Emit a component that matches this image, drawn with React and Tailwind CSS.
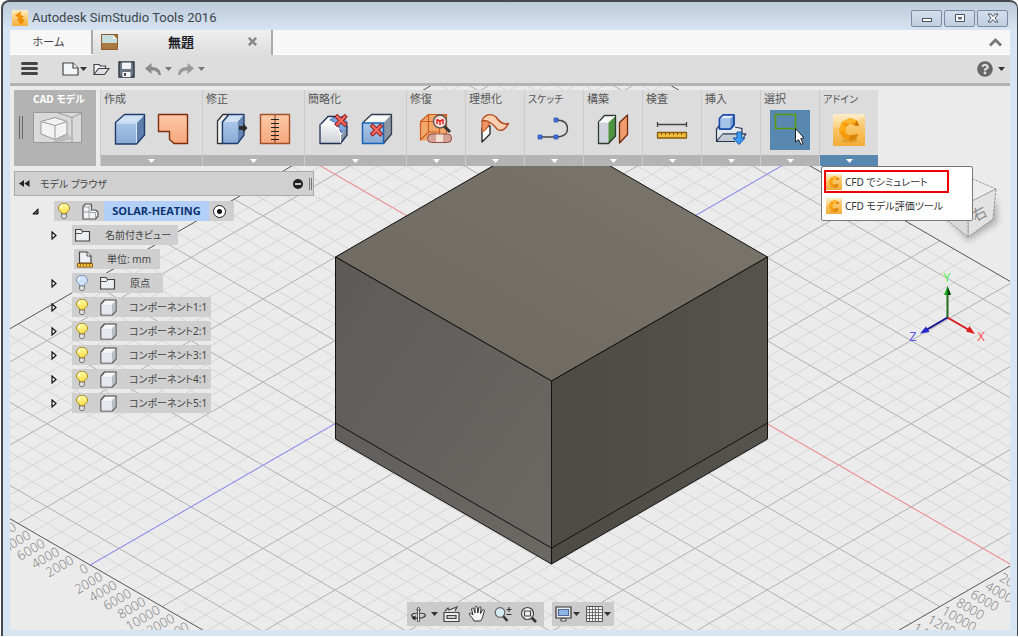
import React, { useState } from 'react';
import { FaQuestionCircle } from 'react-icons/fa';

const JP = "font-['Noto_Sans','Noto_Sans_CJK_JP',sans-serif]";

const Caret = ({ className = 'text-[#333]' }) => (
  <svg viewBox="0 0 7 4" className={`w-[7px] h-1 shrink-0 ${className}`} fill="currentColor">
    <path d="M0 0h7L3.5 4z" />
  </svg>
);

/* ---------- Ribbon icons ---------- */

const Icon = ({ children }) => (
  <svg viewBox="0 0 36 36" className="w-9 h-9 shrink-0" strokeLinejoin="round">
    {children}
  </svg>
);

const Gradients = () => (
  <svg className="absolute w-0 h-0" aria-hidden="true">
    <defs>
      <linearGradient id="blueFront" x1="0" y1="0" x2="0" y2="1">
        <stop offset="0" stopColor="#a9c6e8" />
        <stop offset="1" stopColor="#8aaad4" />
      </linearGradient>
      <linearGradient id="peach" x1="0" y1="0" x2="0" y2="1">
        <stop offset="0" stopColor="#fbc9a6" />
        <stop offset="1" stopColor="#f7a87e" />
      </linearGradient>
      <linearGradient id="whiteFace" x1="0" y1="0" x2="0" y2="1">
        <stop offset="0" stopColor="#f4f4f6" />
        <stop offset="1" stopColor="#cdd0d6" />
      </linearGradient>
      <linearGradient id="cfdBack" x1="0" y1="0" x2="0" y2="1">
        <stop offset="0" stopColor="#fdeecb" />
        <stop offset="0.45" stopColor="#fbd07a" />
        <stop offset="1" stopColor="#f3ae3c" />
      </linearGradient>
      <linearGradient id="bulb" x1="0" y1="0" x2="0" y2="1">
        <stop offset="0" stopColor="#fffbb0" />
        <stop offset="1" stopColor="#f8dc3c" />
      </linearGradient>
    </defs>
  </svg>
);

const BoxIcon = () => (
  <Icon>
    <path d="M3.5 10.5L12.5 2.5H32.5L24.5 10.5z" fill="#cfe1f3" />
    <path d="M24.5 10.5L32.5 2.5V23L24.5 32z" fill="#5e7eac" />
    <path d="M3.5 10.5H24.5V32H3.5z" fill="url(#blueFront)" />
    <path d="M4 11H24.5L32 3M24.5 11V31" fill="none" stroke="#d7e8f8" />
    <path d="M3.5 10.5L12.5 2.5H32.5V23L24.5 32H3.5z" fill="none" stroke="#1e3c6e" strokeWidth="1.4" />
  </Icon>
);

const PatchIcon = () => (
  <Icon>
    <path
      d="M3.5 2.5H32.5V31.5H19L14.5 27.5V19.5H3.5z"
      fill="url(#peach)" stroke="#7e2c0c" strokeWidth="1.4"
    />
  </Icon>
);

const PushIcon = () => (
  <Icon>
    <path d="M3.5 31.5V9L9 2.5H15L8.5 10V31.5z" fill="#eef0f2" stroke="#333" strokeWidth="1.3" />
    <path d="M8.5 10L15 2.5H30L23.5 10z" fill="#cfe1f3" />
    <path d="M23.5 10L30 2.5V23L23.5 31.5z" fill="#6687b4" />
    <path d="M8.5 10H23.5V31.5H8.5z" fill="url(#blueFront)" />
    <path d="M8.5 10L15 2.5H30V23L23.5 31.5H8.5z" fill="none" stroke="#1e3c6e" strokeWidth="1.3" />
    <path d="M25 14h4V11L33.5 16l-4.5 5V18H25z" fill="#2c2c2c" />
  </Icon>
);

const StitchIcon = () => (
  <Icon>
    <path d="M3.5 2.5H32.5V31.5H3.5z" fill="url(#peach)" stroke="#a0502a" strokeWidth="1.4" />
    <path d="M18 3V31" stroke="#8a3a18" />
    <path d="M14 7.5h8M14 11.5h8M14 15.5h8M14 19.5h8M14 23.5h8M14 27.5h8" stroke="#222" />
  </Icon>
);

const Cross = ({ x, y }) => (
  <g transform={`translate(${x} ${y})`} strokeLinecap="square">
    <path d="M-3.8 -3.8L3.8 3.8M3.8 -3.8L-3.8 3.8" stroke="#8e1616" strokeWidth="4.2" />
    <path d="M-3.8 -3.8L3.8 3.8M3.8 -3.8L-3.8 3.8" stroke="#f4695c" strokeWidth="2.4" />
  </g>
);

const FilletIcon = () => (
  <Icon>
    <path d="M4 13L12 4.5H24L31 13V23L24.5 31.5H4z" fill="#fafafa" />
    <path d="M14 8L19 4.500H27L31 10V17L25 21Q23 11 14 8z" fill="#7fa6da" stroke="#2850a0" strokeWidth="1" strokeDasharray="3 1" />
    <path d="M4 13H11Q24 14 24.5 25V31.5H4z" fill="url(#whiteFace)" />
    <path d="M24.5 24L31 16V23L24.5 31.5z" fill="#8794a8" />
    <path d="M19 4.5H12L4 13V31.5H24.5L31 23V14" fill="none" stroke="#1e2f58" strokeWidth="1.3" />
    <path d="M24.5 31V24Q23 13 11 13H4.500" fill="none" stroke="#fff" />
    <Cross x="25" y="8.5" />
  </Icon>
);

const RemoveFaceIcon = () => (
  <Icon>
    <path d="M3.5 11L12.5 2.5H32.5L24.5 11z" fill="#fafafa" />
    <path d="M24.5 11L32.5 2.5V22L24.5 31.5z" fill="#8c95a4" />
    <path d="M3.5 11L12.5 2.5H32.5V22L24.5 31.5" fill="none" stroke="#333c50" strokeWidth="1.3" />
    <path d="M3.5 11H24.5V31.5H3.5z" fill="url(#blueFront)" stroke="#1a62b4" strokeWidth="1.5" />
    <Cross x="17.5" y="18" />
  </Icon>
);

const RepairIcon = () => (
  <Icon>
    <path d="M2.5 9.5L10.5 2.5H28.5V22L22 28.5H2.5z" fill="#f2a86c" />
    <path d="M2.5 28.5V9.5H21.5V28.5M2.5 9.5L10.5 2.5H28.5V22M21.5 9.5L28.5 2.5M10.5 3V20M2.5 28L10.5 20H20" fill="none" stroke="#cc5a1c" strokeWidth="1.2" />
    <path d="M26 14L32 20" stroke="#333" strokeWidth="3" />
    <circle cx="22" cy="9.5" r="6.5" fill="#fce0d8" stroke="#555" strokeWidth="1.4" />
    <path d="M18.500 7.500L22 9L25.500 7.500M22 9V13M19 8V12M25 8V12" fill="none" stroke="#e02020" strokeWidth="1.5" />
    <rect x="9.5" y="22" width="24" height="8.5" rx="4" fill="#d6a298" stroke="#8c4a42" />
    <path d="M18 22.5h7v7.5h-7z" fill="#f0e0d4" />
  </Icon>
);

const RibbonSurfaceIcon = () => (
  <Icon>
    <path d="M5 16V30L13 22V14z" fill="#fff" stroke="#222" strokeWidth="1.3" />
    <path d="M5 9V20Q10 19 13 12L12 5z" fill="#ee9464" />
    <path d="M5 9C7 2 15 1 19 5C23 11 27 13 31.500 11.500C28 18 24 20 20 17C16 12 11 7 5 9z" fill="#fbcfb2" stroke="#b4491e" strokeWidth="1.4" />
    <path d="M5 9V20Q10 18 12.500 11" fill="none" stroke="#b4491e" />
  </Icon>
);

const SketchIcon = () => (
  <Icon>
    <path d="M4 25H20Q31.5 25 31.5 16.5Q31.5 8 20 8" fill="none" stroke="#444" strokeWidth="1.3" />
    <path d="M2 23h4v4h-4zM18 23h4v4h-4zM18 6h4v4h-4z" fill="#3f6fd8" stroke="#2650b0" strokeWidth="0.7" />
  </Icon>
);

const PlaneIcon = () => (
  <Icon>
    <path d="M3.5 10L9.5 3.5H20.5L13.5 10z" fill="#fafafa" />
    <path d="M3.5 10H13.5V31.5H3.5z" fill="#cfd2da" />
    <path d="M13.5 10L20.5 3.5V24L13.5 31.5z" fill="#4d9340" />
    <path d="M3.5 10L9.5 3.5H20.5V24L13.5 31.5H3.5z" fill="none" stroke="#2e3a34" strokeWidth="1.3" />
    <path d="M4 10H13.5L20 4" fill="none" stroke="#fff" />
    <path d="M24.5 10.5L32.5 3V22.5L24.5 31z" fill="#f09c6c" stroke="#6e2c10" strokeWidth="1.3" />
  </Icon>
);

const MeasureIcon = () => (
  <Icon>
    <path d="M3.5 12.5H32.5M3.5 10V15M32.5 10V15" stroke="#444" strokeWidth="1.3" />
    <rect x="3.5" y="20.5" width="29" height="5.5" fill="#f2bd3c" stroke="#8a5a0c" strokeWidth="1.3" />
    <path d="M7.5 21v2M11.5 21v2M15.5 21v2M19.5 21v2M23.5 21v2M27.5 21v2" stroke="#8a5a0c" />
  </Icon>
);

const InsertIcon = () => (
  <Icon>
    <path d="M3.5 17L9 12H25V17H31V21L25 29H3.5z" fill="#e4e7ec" />
    <path d="M3.5 17L7 13M3.5 17V29.500H20M3.500 29.500L10 22H33L30 26M22 15L29 16.500V22" fill="none" stroke="#24344e" strokeWidth="1.2" />
    <path d="M10 22H32L27 29H4.500z" fill="#c4cad4" />
    <path d="M10 22H33M3.500 29.500H22" stroke="#24344e" />
    <path d="M6.5 6.5L10 3H21V13L17.5 17H6.5z" fill="#6f98d0" stroke="#1546a6" strokeWidth="1.4" />
    <path d="M6.5 6.5L10 3H21L17.500 6.500z" fill="#e2edf9" />
    <path d="M6.500 6.500H17.5V17H6.500z" fill="#a5c4ea" />
    <path d="M6.500 6.500L10 3H21V13L17.5 17H6.500z" fill="none" stroke="#1546a6" strokeWidth="1.4" />
    <path d="M24 20h4.5v6H32l-6 6.5-6-6.5h4z" fill="#3c9cf4" stroke="#1558a8" />
  </Icon>
);

const SelectIcon = () => (
  <svg viewBox="0 0 40 40" className="w-10 h-10">
    <path d="M5.5 4.5H25.5V18.5H5.5z" fill="none" stroke="#5a9a10" strokeWidth="1.6" />
    <path d="M25.5 18.5V32L28.5 29.5L31 34.5L33 33.5L30.8 28.5L34 28z" fill="#fff" stroke="#222" />
  </svg>
);

const CfdIcon = ({ className }) => (
  <svg viewBox="0 0 32 32" className={className}>
    <rect width="32" height="32" fill="url(#cfdBack)" />
    <path d="M0 14Q18 14 32 2V32H0z" fill="#f2a72a" opacity="0.25" />
    <ellipse cx="17" cy="26.5" rx="8" ry="2" fill="#d08a20" opacity="0.5" />
    <path d="M17 4L24 6.5L26 12L21.5 11.5L17 10L13 13L12.5 19L17 21.5L25 20L23 25L16 27L9 23L6 16L9 8z" fill="#f39a0c" />
    <path d="M17 4L24 6.5L17 10L9 8z" fill="#ffb62c" />
    <path d="M9 8L13 13L12.5 19L6 16z" fill="#ffac18" />
    <path d="M24 6.5L26 12L21.5 11.5z" fill="#c87204" />
    <path d="M17 21.5L25 20L23 25L16 27z" fill="#d98208" />
  </svg>
);

/* ---------- Tree icons ---------- */

const BulbIcon = ({ off }) => (
  <svg viewBox="0 0 12 16" className="w-3 h-4 shrink-0">
    <path d="M3.5 9.5C1 8 .5 6.5 .5 5A5.5 4.8 0 0 1 11.5 5C11.5 6.5 11 8 8.5 9.5V11H3.5z" fill={off ? '#cfe0fa' : 'url(#bulb)'} stroke={off ? '#7c92b8' : '#a88a20'} />
    <path d="M4 2.5Q2.5 3.5 3 5.5" fill="none" stroke="#fff" strokeWidth="1.2" />
    <path d="M3.5 11h5v3l-1 1.500h-3l-1-1.500z" fill="#ddd" stroke="#666" strokeWidth="0.8" />
  </svg>
);

const FolderIcon = () => (
  <svg viewBox="0 0 16 14" className="w-4 h-[14px] shrink-0">
    <path d="M.5 13V1.5H6L7.5 3.5H14.5V13z" fill="#eceef2" stroke="#444" strokeWidth="1.2" />
    <path d="M1 5.5H6.5L8 4" fill="none" stroke="#555" />
  </svg>
);

const BodyIcon = () => (
  <svg viewBox="0 0 17 17" className="w-[17px] h-[17px] shrink-0">
    <path d="M1 5L4.5 1H16V12L12 16H1z" fill="#f7f7f9" stroke="#444" strokeWidth="1.2" strokeLinejoin="round" />
    <path d="M12 5.5L15.5 1.5V12L12 15.5z" fill="#b8bcc6" />
    <path d="M1.6 5.5H12V15.4H1.6z" fill="#e6e7ee" />
  </svg>
);

const AssemblyIcon = () => (
  <svg viewBox="0 0 17 17" className="w-[17px] h-[17px] shrink-0" strokeLinejoin="round">
    <path d="M1 3.5L3.5 1H9.5V7H13.5L16 9V13L13.5 16H1z" fill="#f2f3f6" stroke="#555" strokeWidth="1.2" />
    <path d="M1 4H7L9.5 1.5M7 4V9H1M7 9L9.5 7M7 9V16M8 9.5H13.5L16 7.5M13.5 9.5V15.5" fill="none" stroke="#8a8e98" strokeWidth="0.8" />
  </svg>
);

const UnitIcon = () => (
  <svg viewBox="0 0 16 17" className="w-4 h-[17px] shrink-0">
    <path d="M2.5 12V1H10L14 5V12z" fill="#eef0f4" stroke="#444" strokeWidth="1.2" />
    <path d="M10 1V5H14" fill="#fff" stroke="#444" />
    <path d="M.5 12.5H15.5V16H.5z" fill="#f6c63c" stroke="#8a5a0c" />
    <path d="M3.5 13v1.5M6.5 13v1.5M9.5 13v1.5M12.5 13v1.5" stroke="#8a5a0c" />
  </svg>
);

/* ---------- 3D scene ---------- */

const CX = 551;
const CY = 299;
const DX = 14.4;
const DY = 8.314;
const MIN = -17;
const MAX = 32;

// Grid coordinates (a along the right axis, b along the left one) to screen space
const project = (a, b) => [CX + DX * (b - a), CY + DY * (a + b)];

const gridLines = [];
for (let k = MIN; k <= MAX; k++) {
  const edge = k === MIN || k === MAX;
  const stroke = edge ? '#555555' : k % 5 === 0 ? '#b0b0b0' : '#d6d6d6';
  const order = edge ? 2 : k % 5 === 0 ? 1 : 0;
  gridLines.push({ id: `a${k}`, from: project(k, MIN), to: project(k, MAX), stroke, order });
  gridLines.push({ id: `b${k}`, from: project(MIN, k), to: project(MAX, k), stroke, order });
}
gridLines.sort((p, q) => p.order - q.order);

const leftTicks = [-5, -4, -3, -2, -1, 0, 1, 2, 3, 4, 5, 6, 7];
const rightTicks = [1, 2, 3, 4, 5, 6, 7];

const Scene = () => {
  const [bx1, by1] = project(MAX, 0);
  const [bx2, by2] = project(MIN, 0);
  const [rx1, ry1] = project(0, MIN);
  const [rx2, ry2] = project(0, MAX);
  return (
    <svg
      viewBox="10 86 1000 544"
      preserveAspectRatio="xMidYMid slice"
      className="absolute inset-0 w-full h-full"
    >
      <defs>
        <linearGradient id="topFace" x1="0" y1="1" x2="1" y2="0">
          <stop offset="0" stopColor="#6c685f" />
          <stop offset="1" stopColor="#7b776d" />
        </linearGradient>
        <linearGradient id="leftFace" x1="0" y1="0" x2="1" y2="1">
          <stop offset="0" stopColor="#5c5b57" />
          <stop offset="1" stopColor="#6a6964" />
        </linearGradient>
        <linearGradient id="rightFace" x1="0" y1="0" x2="1" y2="0">
          <stop offset="0" stopColor="#4e4a44" />
          <stop offset="1" stopColor="#54534c" />
        </linearGradient>
        <filter id="soft" x="-50%" y="-50%" width="200%" height="200%">
          <feGaussianBlur stdDeviation="3" />
        </filter>
      </defs>

      {gridLines.map((l) => (
        <line key={l.id} x1={l.from[0]} y1={l.from[1]} x2={l.to[0]} y2={l.to[1]} stroke={l.stroke} />
      ))}
      <line x1={bx1} y1={by1} x2={bx2} y2={by2} stroke="#8a8aff" />
      <line x1={rx1} y1={ry1} x2={rx2} y2={ry2} stroke="#ff8a8a" />

      {/* Ruler labels */}
      <g fill="#777" fontSize="13" fontFamily="'Open Sans', sans-serif" fontWeight="300">
        {leftTicks.map((k) => {
          const [x, y] = project(MAX, k);
          return (
            <text key={k} transform={`translate(${x - 1} ${y + 6}) rotate(-30)`} textAnchor="end">
              {Math.abs(k) * 2000}
            </text>
          );
        })}
        {rightTicks.map((k) => {
          const [x, y] = project(k, MAX);
          return (
            <text key={k} transform={`translate(${x + 1} ${y + 7}) rotate(30)`}>
              {k * 2000}
            </text>
          );
        })}
      </g>

      {/* Solid body */}
      <g stroke="#111" strokeWidth="1" strokeLinejoin="round">
        <path d="M335.5 257L551.5 132L767.5 257L551.5 381z" fill="url(#topFace)" />
        <path d="M335.5 257L551.5 381V564L335.5 439z" fill="url(#leftFace)" />
        <path d="M767.5 257L551.5 381V564L767.5 439z" fill="url(#rightFace)" />
        <path d="M335.5 423L551.5 548L767.5 423" fill="none" />
      </g>

      {/* View cube */}
      <path d="M944 214L968 241L998 222L996 200z" fill="#888" opacity="0.6" filter="url(#soft)" />
      <g stroke="#888" strokeWidth="0.8" strokeDasharray="3 1">
        <path d="M968 177L996 189L968 203L940 190z" fill="#ededed" />
        <path d="M996 189L993 219L968 237V203z" fill="#e2e2e2" />
        <path d="M940 190L943 217L968 237V203z" fill="#dadada" />
      </g>
      <text
        transform="translate(975 222) rotate(-28)"
        fontSize="15" fill="#8a8a8a" fontFamily="'Noto Sans CJK JP', sans-serif"
      >
        右
      </text>

      {/* Axis triad */}
      <g strokeWidth="2">
        <path d="M947.5 317.5V292" stroke="#1e6a1e" />
        <path d="M944 295L947.5 286L951 295z" fill="#18b018" />
        <path d="M947.5 286L951 295H947.5z" fill="#0a3c0a" />
        <path d="M947.5 317.5L969 330" stroke="#d81818" />
        <path d="M966 331.5L975 334L969.5 326z" fill="#e02020" />
        <path d="M947.5 317.5L927 329.5" stroke="#101090" />
        <path d="M920 333.5L926 326.5L929.5 332z" fill="#2828c8" />
      </g>
      <g fontSize="12" fontFamily="'Liberation Sans', sans-serif" textAnchor="middle">
        <text x="947" y="282" fill="#4cf04c">Y</text>
        <text x="981" y="341" fill="#ff5050">X</text>
        <text x="913" y="341" fill="#5858e8">Z</text>
      </g>
    </svg>
  );
};

/* ---------- Chrome ---------- */

const WindowButton = ({ label, children }) => (
  <button
    aria-label={label}
    className="w-[31px] h-[17px] flex items-center justify-center rounded-[2px] border border-[#7d8aa6] bg-gradient-to-b from-[#d3deea] to-[#c0cfdf]"
  >
    <svg viewBox="0 0 12 10" className="w-3 h-[10px]" fill="#fff" stroke="#4a5068">
      {children}
    </svg>
  </button>
);

const TitleBar = () => (
  <header className="h-7 shrink-0 flex items-center justify-between px-[2px]">
    <div className="flex items-center gap-1 pt-1">
      <svg viewBox="0 0 16 16" className="w-4 h-4">
        <rect width="16" height="16" fill="url(#cfdBack)" />
        <path d="M9 1L3 5.5L7 8L5 9.5L9 15L13 10L9.5 8.5L12 6.5L8.5 5z" fill="#f08c00" />
      </svg>
      <h1 className="font-['Roboto',sans-serif] text-[13px] leading-4 text-[#3c444c]">
        Autodesk SimStudio Tools 2016
      </h1>
    </div>
    <div className="flex gap-[2px] pt-1">
      <WindowButton label="最小化"><rect x="1.5" y="5.5" width="9" height="3" /></WindowButton>
      <WindowButton label="最大化">
        <path d="M1.5 1.5h9v7h-9zM4.5 4.5h3v1.500h-3z" fillRule="evenodd" />
      </WindowButton>
      <WindowButton label="閉じる">
        <path d="M1 1h3l2 2.500L8 1h3L8 5l3 4H8L6 6.500 4 9H1l3-4z" />
      </WindowButton>
    </div>
  </header>
);

const TabBar = () => (
  <nav className="h-[25px] shrink-0 flex bg-[#f7f7f7] border-b border-white text-[#444]">
    <button className="w-[83px] pr-1 text-[11px] leading-4 border-r-2 border-[#aaa]">ホーム</button>
    <div className="w-[180px] h-[25px] flex items-center justify-between pl-2 pr-[10px] pb-[2px] bg-gradient-to-b from-[#f0f0f0] to-[#dddddd] border-r-2 border-[#aaa]">
      <svg viewBox="0 0 17 16" className="w-[17px] h-4">
        <rect x=".5" y=".5" width="16" height="15" fill="#a87840" stroke="#8a5e30" />
        <path d="M1 1h11l4 4v4H1z" fill="#c4dcdc" />
        <path d="M12 1v4h4z" fill="#f4f4e0" />
      </svg>
      <span className="text-[13px] leading-4 font-bold text-[#1c1c28]">無題</span>
      <button aria-label="タブを閉じる" className="p-1">
        <svg viewBox="0 0 9 9" className="w-[9px] h-[9px]" stroke="#888" strokeWidth="2.5">
          <path d="M.8 .8L8.200 8.200M8.200 .8L.8 8.200" />
        </svg>
      </button>
    </div>
    <button aria-label="リボンを折りたたむ" className="ml-auto mr-2">
      <svg viewBox="0 0 13 9" className="w-[13px] h-[9px]" fill="none" stroke="#777" strokeWidth="2.8">
        <path d="M1 7.5L6.5 2L12 7.5" />
      </svg>
    </button>
  </nav>
);

const QuickAccess = () => (
  <div className="h-[31px] shrink-0 flex items-center pl-[11px] pr-[5px] bg-[#dddddd] border-b-[3px] border-[#b3b3b3]">
    <button aria-label="メニュー" className="flex flex-col gap-[2px] mr-6 pb-[2px]">
      <span className="w-[17px] h-[3px] rounded-sm bg-[#444]" />
      <span className="w-[17px] h-[3px] rounded-sm bg-[#444]" />
      <span className="w-[17px] h-[3px] rounded-sm bg-[#444]" />
    </button>
    <button aria-label="新規" className="flex items-center gap-px mr-[6px]">
      <svg viewBox="0 0 17 14" className="w-[17px] h-[14px]" fill="#f4f5f8" stroke="#444" strokeWidth="1.2">
        <path d="M1 1H11L16 6V13H1z" />
        <path d="M11 1V6H16" />
      </svg>
      <Caret />
    </button>
    <button aria-label="開く" className="mr-2">
      <svg viewBox="0 0 17 14" className="w-[17px] h-[14px]" stroke="#444" strokeWidth="1.2" fill="#f4f5f8">
        <path d="M1 12.5V2.5H6L7.5 4H12.5V6.5" />
        <path d="M1 12.5L5.5 6.5H16L11.5 12.5z" fill="#dde0e6" />
      </svg>
    </button>
    <button aria-label="保存" className="mr-[10px]">
      <svg viewBox="0 0 17 17" className="w-[17px] h-[17px]">
        <path d="M1 1H16V16H1z" fill="#6b7684" stroke="#2c3440" strokeWidth="1.4" />
        <path d="M4 1.5h9v6.500H4z" fill="#f0f2f6" />
        <path d="M4.5 11h8v5h-8z" fill="#f4f6f8" />
        <path d="M6 12h2v3H6z" fill="#444" />
      </svg>
    </button>
    <button aria-label="元に戻す" className="flex items-center gap-[3px] mr-[5px]">
      <svg viewBox="0 0 17 13" className="w-[17px] h-[13px]" fill="#8c8c8c">
        <path d="M0 5.5L6.5 0V4C12 4 15.5 6 16 12H13.5C13 9 11 7.5 6.5 7.5V11z" />
      </svg>
      <Caret className="text-[#777]" />
    </button>
    <button aria-label="やり直し" className="flex items-center gap-1">
      <svg viewBox="0 0 17 13" className="w-[17px] h-[13px]" fill="#999">
        <path d="M17 5.5L10.5 0V4C5 4 1.5 6 1 12H3.5C4 9 6 7.5 10.5 7.5V11z" />
      </svg>
      <Caret className="text-[#777]" />
    </button>
    <button aria-label="ヘルプ" className="ml-auto flex items-center gap-[5px]">
      <FaQuestionCircle className="w-4 h-4 text-[#666]" />
      <Caret />
    </button>
  </div>
);

const groups = [
  { name: '作成', wide: true, icons: [BoxIcon, PatchIcon] },
  { name: '修正', wide: true, icons: [PushIcon, StitchIcon] },
  { name: '簡略化', wide: true, icons: [FilletIcon, RemoveFaceIcon] },
  { name: '修復', icons: [RepairIcon] },
  { name: '理想化', icons: [RibbonSurfaceIcon] },
  { name: 'スケッチ', icons: [SketchIcon], kana: true },
  { name: '構築', icons: [PlaneIcon] },
  { name: '検査', icons: [MeasureIcon] },
  { name: '挿入', icons: [InsertIcon] },
  { name: '選択', icons: [SelectIcon], selected: true },
];

const RibbonGroup = ({ name, icons, wide, kana, selected, open, onToggle, children }) => (
  <section className={`relative h-[76px] flex flex-col shrink-0 bg-[#dcdcdc] border-l border-[#cbcbcb] ${wide ? 'w-[102px]' : 'w-[59px]'}`}>
    <h2 className={`h-5 pl-[3px] pt-px leading-4 text-[#555] whitespace-nowrap [font-feature-settings:'palt'] ${kana ? 'text-[10px]' : 'text-[11px]'}`}>{name}</h2>
    <div className="h-10 flex items-center justify-center gap-[7px]">
      {icons.map((Ico, i) => (
        <button key={i} aria-label={`${name} ${i + 1}`} className={selected ? 'bg-[#5888b0]' : ''}>
          <Ico />
        </button>
      ))}
    </div>
    <button
      aria-label={`${name} メニュー`}
      onClick={onToggle}
      className={`mt-auto h-[11px] flex items-center justify-center ${open ? 'bg-[#5888b0]' : 'bg-[#b4b4b4]'}`}
    >
      <Caret className="text-white" />
    </button>
    {children}
  </section>
);

const AddinIcon = () => <CfdIcon className="w-8 h-8" />;

const Ribbon = () => {
  const [menuOpen, setMenuOpen] = useState(true);
  return (
    <div className="relative z-10 flex">
      <button className="w-[82px] h-[76px] mr-1 shrink-0 bg-[#b3b3b3] flex flex-col pt-px">
        <span className="w-full pl-2 text-[10px] leading-4 font-bold text-white text-center [font-feature-settings:'palt']">CAD モデル</span>
        <span className="flex items-center gap-[10px] pl-[5px] pt-[5px]">
          <span className="w-1 h-[23px] border-x border-[#666]" />
          <svg viewBox="0 0 49 31" className="w-[49px] h-[31px]" fill="none" stroke="#999">
            <path d="M.5 .5h48v30H.5z" fill="#d9d9d9" />
            <path d="M24 .5L39 5.5L48.5 1M39 5.5V30" />
            <path d="M34 21L39 27L27 30H20z" fill="#bdbdbd" stroke="none" />
            <path d="M8 9.5L22 5.5L34 9.5V22L22 27.5L8 22z" fill="#f2f2f2" />
            <path d="M8 9.5L22 13.5L34 9.5M22 13.5V27.5" />
          </svg>
        </span>
      </button>
      {groups.map((g) => (
        <RibbonGroup key={g.name} {...g} />
      ))}
      <RibbonGroup name="アドイン" kana icons={[AddinIcon]} open={menuOpen} onToggle={() => setMenuOpen(!menuOpen)}>
        {menuOpen && (
          <div className="absolute top-full left-px w-[152px] p-[2px] pt-[3px] bg-white border border-[#777] rounded-[2px] text-[10px] leading-4 text-[#333] [font-feature-settings:'palt']">
            <button className="w-[125px] h-[23px] flex items-center gap-[3px] border-2 border-[#f00000] whitespace-nowrap">
              <CfdIcon className="w-4 h-4 shrink-0" />
              CFD でシミュレート
            </button>
            <button className="w-full h-[25px] pl-[2px] flex items-center gap-[3px] whitespace-nowrap">
              <CfdIcon className="w-4 h-4 shrink-0" />
              CFD モデル評価ツール
            </button>
          </div>
        )}
      </RibbonGroup>
    </div>
  );
};

const Expander = () => (
  <button aria-label="展開" className="w-[22px] shrink-0">
    <svg viewBox="0 0 6 9" className="w-[6px] h-[9px] ml-px" fill="#fff" stroke="#111" strokeWidth="1.2">
      <path d="M1 1L5 4.5L1 8z" />
    </svg>
  </button>
);

const components = ['コンポーネント1:1', 'コンポーネント2:1', 'コンポーネント3:1', 'コンポーネント4:1', 'コンポーネント5:1'];

const ModelBrowser = () => (
  <aside className="relative w-[300px] mt-[5px] text-[10px] leading-4 text-[#444] [font-feature-settings:'palt']">
    <div className="h-[25px] flex items-center pl-1 pr-px bg-[#d0d0d0] border border-[#aaa]">
      <button aria-label="折りたたむ" className="mr-[10px]">
        <svg viewBox="0 0 11 7" className="w-[11px] h-[7px]" fill="#222">
          <path d="M5 0v7L0 3.500zM10.500 0v7L5.500 3.500z" />
        </svg>
      </button>
      <h2>モデル ブラウザ</h2>
      <button aria-label="閉じる" className="ml-auto mr-[6px]">
        <svg viewBox="0 0 10 10" className="w-[10px] h-[10px]">
          <circle cx="5" cy="5" r="5" fill="#222" />
          <path d="M2 5h6" stroke="#fff" strokeWidth="1.5" />
        </svg>
      </button>
      <span className="w-[3px] h-3 border-x border-[#777]" />
    </div>

    <ul className="mt-[5px] flex flex-col gap-1">
      <li className="flex items-center h-5 pl-[18px]">
        <button aria-label="折りたたむ" className="w-[22px] shrink-0">
          <svg viewBox="0 0 7 7" className="w-[7px] h-[7px]" fill="#555" stroke="#111">
            <path d="M6 .8V6H.8z" />
          </svg>
        </button>
        <div className="w-[180px] h-5 flex items-center pl-1 bg-[#cfcfcf]">
          <BulbIcon />
          <span className="w-3 shrink-0" />
          <AssemblyIcon />
          <button className="w-[105px] h-5 ml-[5px] mr-1 bg-[#b3d0f8] text-[11px] leading-4 font-bold text-[#0a3370] font-['Open_Sans',sans-serif]">
            SOLAR-HEATING
          </button>
          <input
            type="radio"
            name="active"
            aria-label="アクティブにする"
            defaultChecked
            className="appearance-none w-[13px] h-[13px] rounded-full border border-[#222] bg-[radial-gradient(circle,#111_0,#111_2px,#fff_3px)]"
          />
        </div>
      </li>
      <li className="flex items-center h-5 pl-9">
        <Expander />
        <div className="w-[106px] h-5 flex items-center gap-[14px] pl-[3px] bg-[#cfcfcf]">
          <FolderIcon />
          <span className="whitespace-nowrap">名前付きビュー</span>
        </div>
      </li>
      <li className="flex items-center h-5 pl-[60px]">
        <div className="w-[86px] h-5 flex items-center gap-[14px] pl-[3px] bg-[#cfcfcf]">
          <UnitIcon />
          <span className="whitespace-nowrap">単位: mm</span>
        </div>
      </li>
      <li className="flex items-center h-5 pl-9">
        <Expander />
        <div className="w-[91px] h-5 flex items-center pl-1 bg-[#cfcfcf]">
          <BulbIcon off />
          <span className="w-3 shrink-0" />
          <FolderIcon />
          <span className="ml-[14px] whitespace-nowrap">原点</span>
        </div>
      </li>
      {components.map((name) => (
        <li key={name} className="flex items-center h-5 pl-9">
          <Expander />
          <div className="w-[139px] h-5 flex items-center pl-1 bg-[#cfcfcf]">
            <BulbIcon />
            <span className="w-3 shrink-0" />
            <BodyIcon />
            <span className="ml-3 whitespace-nowrap">{name}</span>
          </div>
        </li>
      ))}
    </ul>
  </aside>
);

const NavBar = () => (
  <div className="relative mt-auto mb-1 flex justify-center gap-2">
    <div className="h-6 flex items-center gap-2 pl-[3px] pr-[7px] bg-[#cbcbcb]">
      <button aria-label="オービット" className="flex items-center gap-1 -mr-[3px]">
        <svg viewBox="0 0 17 17" className="w-[17px] h-[17px]" fill="none" stroke="#333" strokeWidth="1.2">
          <path d="M4 11.5C0 10 1 7 8.5 7S17 10 13 11.5Q11 12.500 5 12" />
          <path d="M8.5 4V16" stroke="#444" strokeWidth="2.6" />
          <path d="M8.5 4V15.500" stroke="#eee" strokeWidth="1" />
          <path d="M6.5 4L8.5 1L10.5 4z" fill="#eee" strokeWidth="0.8" />
          <path d="M5.500 9.500L1.500 12L5.500 14.500z" fill="#222" stroke="none" />
        </svg>
        <Caret />
      </button>
      <button aria-label="正面を見る">
        <svg viewBox="0 0 17 17" className="w-[17px] h-[17px]" fill="#eee" stroke="#444" strokeWidth="1.2">
          <path d="M2 5L5 2L6 4L14 1L12 5" />
          <path d="M1 6.5H16V15.5H1z" />
          <path d="M4 9.5H13V12.5H4z" fill="#ccc" />
        </svg>
      </button>
      <button aria-label="画面移動">
        <svg viewBox="0 0 18 18" className="w-[18px] h-[18px]" fill="#f4f4f4" stroke="#333" strokeWidth="1" strokeLinejoin="round">
          <path d="M6 16C5 13 2.5 11.5 1.2 9C1.5 7.5 3 8 5 10L3.5 4C4 2.5 5.5 3 6 4.5L7 8L7 2.5C7.5 .8 9 .8 9.3 2.5L9.8 8L11 2.5C11.8 1.2 13 1.5 13 3L12.5 8.5L14.5 5C15.5 4 16.8 4.800 16.3 6C15 10 15 13 12.5 16z" />
        </svg>
      </button>
      <button aria-label="ズーム">
        <svg viewBox="0 0 18 17" className="w-[18px] h-[17px]" fill="none" stroke="#333">
          <path d="M9 10L13.500 15" strokeWidth="2.6" />
          <circle cx="6" cy="6.5" r="4.8" fill="#d8ecf4" stroke="#666" strokeWidth="1.2" />
          <path d="M15 1v5M12.5 3.5h5M12.5 8.5h5" strokeWidth="1.1" />
        </svg>
      </button>
      <button aria-label="ウィンドウ ズーム">
        <svg viewBox="0 0 17 17" className="w-[17px] h-[17px]" fill="none" stroke="#444">
          <path d="M11 11L16 16" stroke="#333" strokeWidth="2.6" />
          <circle cx="7.500" cy="7.500" r="6" fill="#f2f2f2" strokeWidth="1.2" />
          <path d="M4.5 5H10.5V10H4.5z" strokeWidth="1.2" />
        </svg>
      </button>
    </div>
    <div className="h-6 flex items-center gap-[6px] px-[3px] bg-[#cbcbcb]">
      <button aria-label="表示設定" className="flex items-center gap-px">
        <svg viewBox="0 0 17 16" className="w-[17px] h-4" stroke="#333" strokeWidth="1.2">
          <path d="M1 1H16V12H1z" fill="#eee" />
          <path d="M3.5 3.5H13.5V9.5H3.5z" fill="#8fb4e4" stroke="#4c6c9c" />
          <path d="M6 12.5H11V15H6z" fill="#ddd" stroke="#555" />
        </svg>
        <Caret />
      </button>
      <button aria-label="グリッド" className="flex items-center gap-px">
        <svg viewBox="0 0 17 16" className="w-[17px] h-4" fill="#f2f2f2" stroke="#555">
          <path d="M.5 .5H16.5V15.5H.5z" />
          <path d="M3.5 1V15M6.5 1V15M9.5 1V15M12.5 1V15M1 3.5H16M1 6.5H16M1 9.5H16M1 12.5H16" strokeWidth="0.8" />
        </svg>
        <Caret />
      </button>
    </div>
  </div>
);

const App = () => (
  <div lang="ja" className={`h-screen w-full bg-white pl-px pb-px ${JP}`}>
    <Gradients />
    <div className="h-full flex flex-col rounded-t-lg border-2 border-b-0 border-r border-[#444a50] bg-[linear-gradient(180deg,#bccada_0,#d7e4f1_28px,#d7e4f1_100%)] px-[7px] pb-[6px]">
      <TitleBar />
      <TabBar />
      <QuickAccess />
      <main className="relative flex-1 min-h-0 flex flex-col p-1 pb-0 bg-[#ebebeb] overflow-hidden">
        <Scene />
        <Ribbon />
        <ModelBrowser />
        <NavBar />
      </main>
    </div>
  </div>
);

export default App;
